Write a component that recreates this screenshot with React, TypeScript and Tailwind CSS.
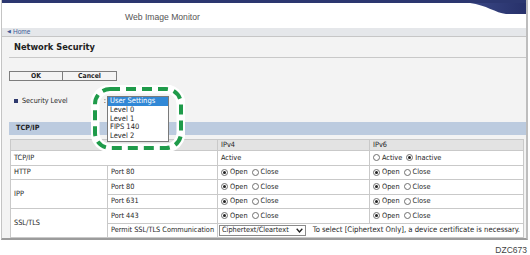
import React from "react";

const cond = { fontFamily: '"DejaVu Sans Condensed", "DejaVu Sans", sans-serif' };

function Radio({ checked }: { checked?: boolean }) {
  return (
    <span className="inline-flex items-center justify-center w-[7px] h-[7px] rounded-full border border-[#6f6f6f] bg-white mr-[2px]">
      {checked && <span className="w-[3px] h-[3px] rounded-full bg-[#222]" />}
    </span>
  );
}

function OpenClose({ a = "Open", b = "Close", checkedFirst = true }: { a?: string; b?: string; checkedFirst?: boolean }) {
  return (
    <div className="flex items-center">
      <Radio checked={checkedFirst} />
      <span className="mr-[4px]">{a}</span>
      <Radio checked={!checkedFirst} />
      <span>{b}</span>
    </div>
  );
}

export default function App() {
  const cell = "border border-[#c9c9c9] px-[3px] h-[14.5px] p-0 align-middle";
  return (
    <div className="w-[530px] h-[255px] bg-white relative overflow-hidden text-[#1e1e1e]" style={cond}>
      <div className="ml-[1px] w-[527px] border-l border-[#c4c4c4] border-r-2 border-r-[#bdbdbd] border-b-2 border-b-[#9c9c9c] bg-[#f3f3f3]">
        {/* top line */}
        <div className="h-[3px] bg-[#2c3770]" />
        {/* header */}
        <div className="h-[25px] bg-white flex items-start justify-between">
          <div
            className="pl-[123px] pt-[8px] text-[8.6px] text-[#555]"
            style={{ fontFamily: '"Liberation Sans", Arial, sans-serif' }}
          >
            Web Image Monitor
          </div>
          <svg width="56" height="12" viewBox="0 0 56 12" className="block">
            <defs>
              <linearGradient id="sw" x1="0" x2="1" y1="0" y2="0">
                <stop offset="0" stopColor="#3a4785" />
                <stop offset="1" stopColor="#27316a" />
              </linearGradient>
            </defs>
            <path d="M0 0 L56 0 L56 11 L36 11 C26 10 16 2 0 0 Z" fill="url(#sw)" />
          </svg>
        </div>
        {/* home bar */}
        <div
          className="h-[9px] bg-[#e5e7ea] border-b border-[#c6c6c6] flex items-center pl-[5px] text-[6.5px] text-[#3b5998]"
          style={{ fontFamily: '"Liberation Sans", Arial, sans-serif' }}
        >
          <span className="text-[5px] mr-[2px]">◀</span>Home
        </div>
        {/* content */}
        <div className="pl-[7px]">
          <div className="h-[20px] flex items-center pl-[5px] font-bold text-[9.2px] text-[#222]">Network Security</div>
          <div className="h-px bg-[#c8c8c8]" />
          <div className="mt-[13px] flex">
            <div className="w-[54px] h-[10px] border border-[#7d7d7d] bg-[#f4f4f4] flex items-center justify-center font-bold text-[6.8px]">
              OK
            </div>
            <div className="w-[54px] h-[10px] border border-l-0 border-[#7d7d7d] bg-[#f4f4f4] flex items-center justify-center font-bold text-[6.8px]">
              Cancel
            </div>
          </div>
          {/* security level */}
          <div className="relative h-[30px] flex items-center text-[7.2px] mt-[5px]">
            <span className="w-[4px] h-[4px] bg-[#2f3a6e] ml-[5px] mr-[4px]" />
            <span>Security Level</span>
            <span className="ml-[36px]">:</span>
            {/* green annotation */}
            <svg className="absolute left-[82px] top-[-1px]" width="94" height="67" viewBox="0 0 94 67">
              <rect x="4" y="4" width="86" height="59" rx="15" fill="none" stroke="#ffffff" strokeWidth="9" />
              <rect x="4" y="4" width="86" height="59" rx="15" fill="none" stroke="#1f9b4a" strokeWidth="4" strokeDasharray="10 6" />
            </svg>
            {/* open list */}
            <div className="absolute left-[98px] top-[10px] w-[62px] bg-white border border-[#7a7a7a] text-[7.5px] leading-[8.8px] z-10">
              <div className="bg-[#3188d6] text-white px-[2px]">User Settings</div>
              <div className="px-[2px]">Level 0</div>
              <div className="px-[2px]">Level 1</div>
              <div className="px-[2px]">FIPS 140</div>
              <div className="px-[2px]">Level 2</div>
            </div>
          </div>
          {/* section bar */}
          <div className="mt-[6px] h-[13px] bg-[#bccbdf] flex items-center pl-[7px] font-bold text-[7.2px]">TCP/IP</div>
          {/* table */}
          <div className="mt-[4px] pl-[1px] pr-[4px]">
            <table className="border-collapse w-[513px] text-[7.3px] leading-[8px] table-fixed">
              <colgroup>
                <col className="w-[97px]" />
                <col className="w-[110px]" />
                <col className="w-[152px]" />
                <col className="w-[154px]" />
              </colgroup>
              <tbody>
                <tr className="bg-[#e3e3e3]">
                  <td className="border border-[#c9c9c9] h-[11px] p-0" colSpan={2}></td>
                  <td className="border border-[#c9c9c9] px-[3px] h-[11px] p-0">IPv4</td>
                  <td className="border border-[#c9c9c9] px-[3px] h-[11px] p-0">IPv6</td>
                </tr>
                <tr className="bg-white">
                  <td className={cell} colSpan={2}>TCP/IP</td>
                  <td className={cell}>Active</td>
                  <td className={cell}>
                    <OpenClose a="Active" b="Inactive" checkedFirst={false} />
                  </td>
                </tr>
                <tr className="bg-white">
                  <td className={cell}>HTTP</td>
                  <td className={cell}>Port 80</td>
                  <td className={cell}><OpenClose /></td>
                  <td className={cell}><OpenClose /></td>
                </tr>
                <tr className="bg-white">
                  <td className={cell} rowSpan={2}>IPP</td>
                  <td className={cell}>Port 80</td>
                  <td className={cell}><OpenClose /></td>
                  <td className={cell}><OpenClose /></td>
                </tr>
                <tr className="bg-white">
                  <td className={cell}>Port 631</td>
                  <td className={cell}><OpenClose /></td>
                  <td className={cell}><OpenClose /></td>
                </tr>
                <tr className="bg-white">
                  <td className={cell} rowSpan={2}>SSL/TLS</td>
                  <td className={cell}>Port 443</td>
                  <td className={cell}><OpenClose /></td>
                  <td className={cell}><OpenClose /></td>
                </tr>
                <tr className="bg-white">
                  <td className={cell + " whitespace-nowrap"}>Permit SSL/TLS Communication</td>
                  <td className={cell + " pl-[1px]"} colSpan={2}>
                    <div className="flex items-center whitespace-nowrap">
                      <div className="h-[11px] w-[90px] border border-[#8a8a8a] bg-white flex items-center justify-between pl-[2px] pr-[2px]">
                        <span>Ciphertext/Cleartext</span>
                        <svg width="7" height="5" viewBox="0 0 7 5" className="block">
                          <path d="M0.7 0.8 L3.5 4 L6.3 0.8" fill="none" stroke="#222" strokeWidth="1.3" />
                        </svg>
                      </div>
                      <span className="ml-[7px] text-[7.65px]">To select [Ciphertext Only], a device certificate is necessary.</span>
                    </div>
                  </td>
                </tr>
              </tbody>
            </table>
          </div>
        </div>
      </div>
      <div
        className="flex justify-end pr-[3px] pt-[5px] text-[8.5px] leading-[10px] text-[#444]"
        style={{ fontFamily: '"Liberation Sans", Arial, sans-serif' }}
      >
        DZC673
      </div>
    </div>
  );
}
